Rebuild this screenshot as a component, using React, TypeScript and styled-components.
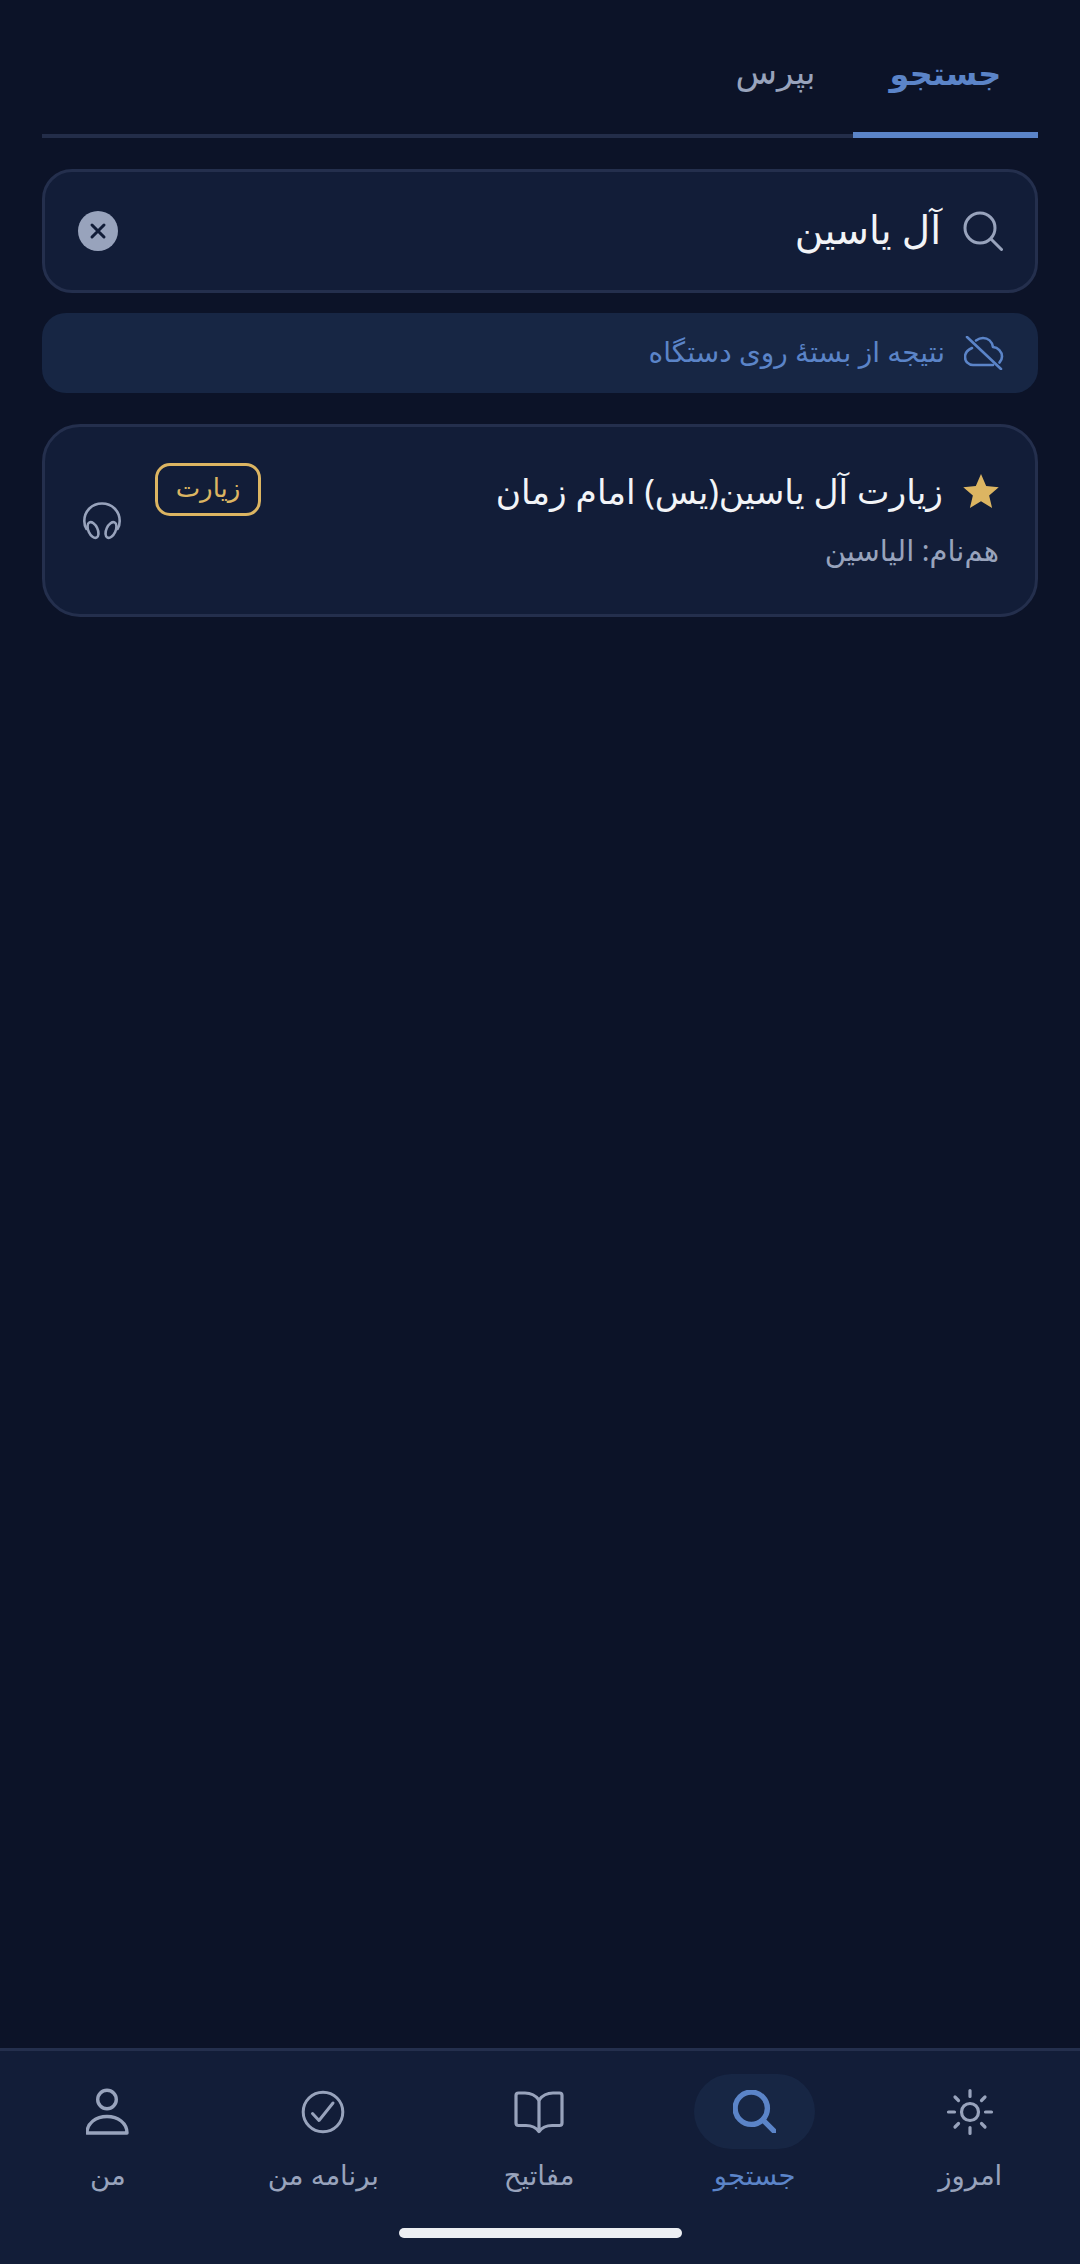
import React from 'react';
import styled, { createGlobalStyle } from 'styled-components';

const BLUE = '#5b84c8';
const MUTED = '#98a3bc';
const BG = '#0c1328';
const SURFACE = '#121d38';
const FONT = '"Noto Sans", "DejaVu Sans", sans-serif';

const GlobalStyle = createGlobalStyle`
  html, body {
    margin: 0;
    padding: 0;
    background: ${BG};
  }
  * {
    box-sizing: border-box;
  }
`;

const SearchIcon = ({ size, color, width }: { size: number; color: string; width: number }) => (
  <svg width={size} height={size} viewBox="0 0 40 40" fill="none" stroke={color} strokeWidth={width} strokeLinecap="round">
    <circle cx="17" cy="17" r="15" />
    <path d="M28 28l10.5 10.5" />
  </svg>
);

const CloudOffIcon = () => (
  <svg width="40" height="34" viewBox="0 0 40 34" fill="none" stroke={BLUE} strokeWidth="2.6" strokeLinecap="round" strokeLinejoin="round">
    <path d="M3 1l34 32" />
    <path d="M8 12C3.500 14 1 17.500 1 21c0 4.500 3.500 8 8 8h20" />
    <path d="M12 4.500C14 3 16.500 2 19 2c5 0 9 3.500 10 9 5 .5 9 4.500 9 9.500 0 2.500-1 4.500-2.500 6" />
  </svg>
);

const StarIcon = () => (
  <svg width="36" height="34" viewBox="0 0 24 23" fill="#dcb562">
    <path d="M12 0l3.500 8.200 8.500.7-6.500 5.700 2 8.400L12 18.500 4.500 23l2-8.400L0 8.900l8.500-.7z" />
  </svg>
);

const HeadphonesIcon = () => (
  <svg width="38" height="38" viewBox="0 0 38 38" fill="none" stroke={MUTED} strokeWidth="2.6" strokeLinecap="round" strokeLinejoin="round">
    <path d="M3.500 27C1.800 24.500 1.300 21.500 1.300 19 1.300 9 9 1.500 19 1.500S36.700 9 36.700 19c0 2.500-.5 5.500-2.200 8" />
    <ellipse cx="10" cy="28" rx="4.600" ry="8.400" transform="rotate(-25 10 28)" />
    <ellipse cx="28" cy="28" rx="4.600" ry="8.400" transform="rotate(25 28 28)" />
  </svg>
);

const ClearIcon = () => (
  <svg width="18" height="18" viewBox="0 0 18 18" fill="none" stroke={SURFACE} strokeWidth="3" strokeLinecap="round">
    <path d="M3 3l12 12M15 3L3 15" />
  </svg>
);

const SunIcon = () => (
  <svg width="48" height="48" viewBox="0 0 48 48" fill="none" stroke={MUTED} strokeWidth="3.200" strokeLinecap="round">
    <circle cx="24" cy="24" r="8.500" />
    <path d="M24 2.500v6M24 39.500v6M2.500 24h6M39.500 24h6M9 9l3.500 3.500M35.500 35.500L39 39M9 39l3.500-3.500M35.500 12.500L39 9" />
  </svg>
);

const BookIcon = () => (
  <svg width="50" height="44" viewBox="0 0 50 44" fill="none" stroke={MUTED} strokeWidth="3.200" strokeLinecap="round" strokeLinejoin="round">
    <path d="M25 10c-3-4-8-7-14-7H4.500C3 3 2 4 2 5.500V33c0 1.500 1 2.500 2.500 2.500H12c6 0 10 2 13 6 3-4 7-6 13-6h7.500c1.500 0 2.500-1 2.500-2.500V5.500C48 4 47 3 45.500 3H39c-6 0-11 3-14 7z" />
    <path d="M25 10v31" />
  </svg>
);

const CheckCircleIcon = () => (
  <svg width="44" height="44" viewBox="0 0 44 44" fill="none" stroke={MUTED} strokeWidth="3" strokeLinecap="round" strokeLinejoin="round">
    <circle cx="22" cy="22" r="19.800" />
    <path d="M11.500 23.500l6.500 7L32 13" />
  </svg>
);

const UserIcon = () => (
  <svg width="44" height="48" viewBox="0 0 44 48" fill="none" stroke={MUTED} strokeWidth="3.400" strokeLinecap="round" strokeLinejoin="round">
    <circle cx="21" cy="11.500" r="9.300" />
    <path d="M1 45c0-10 9-16.500 20-16.500S41 35 41 45z" />
  </svg>
);

const Page = styled.div`
  direction: rtl;
  width: 1080px;
  height: 2264px;
  display: flex;
  flex-direction: column;
  background: ${BG};
  font-family: ${FONT};
`;

const Main = styled.main`
  flex: 1;
  padding: 0 42px;
  display: flex;
  flex-direction: column;
`;

const Tabs = styled.div`
  height: 138px;
  display: flex;
  border-bottom: 4px solid #232d49;
`;

const Tab = styled.div<{ $active?: boolean }>`
  width: ${({ $active }) => ($active ? '185px' : '155px')};
  height: 138px;
  flex: none;
  display: flex;
  align-items: flex-start;
  justify-content: center;
  padding-top: ${({ $active }) => ($active ? '50px' : '48px')};
  font-size: ${({ $active }) => ($active ? '32px' : '34px')};
  line-height: 46px;
  font-weight: ${({ $active }) => ($active ? 700 : 400)};
  color: ${({ $active }) => ($active ? BLUE : MUTED)};
  border-bottom: 6px solid ${({ $active }) => ($active ? BLUE : 'transparent')};
`;

const SearchBox = styled.div`
  margin-top: 31px;
  height: 124px;
  display: flex;
  align-items: center;
  padding: 0 32px 0 33px;
  background: ${SURFACE};
  border: 3px solid #242f4d;
  border-radius: 30px;
`;

const SearchText = styled.div`
  flex: 1;
  margin: -5px 22px 0 0;
  font-size: 39px;
  line-height: 50px;
  color: #f2f4f7;
`;

const ClearButton = styled.div`
  width: 40px;
  height: 40px;
  border-radius: 50%;
  background: ${MUTED};
  display: flex;
  align-items: center;
  justify-content: center;
`;

const Notice = styled.div`
  margin-top: 20px;
  height: 80px;
  display: flex;
  align-items: center;
  gap: 19px;
  padding: 0 34px;
  background: #172644;
  border-radius: 24px;
  font-size: 28px;
  color: ${BLUE};
`;

const NoticeText = styled.span`
  margin-top: -5px;
`;

const ResultCard = styled.div`
  margin-top: 31px;
  height: 193px;
  display: flex;
  padding: 38px 36px 0 38px;
  background: ${SURFACE};
  border: 3px solid #242f4d;
  border-radius: 38px;
`;

const ResultBody = styled.div`
  flex: 1;
  display: flex;
  flex-direction: column;
`;

const TitleRow = styled.div`
  display: flex;
  align-items: center;
  gap: 20px;
  height: 52px;
`;

const Title = styled.div`
  flex: 1;
  font-size: 34.500px;
  line-height: 52px;
  color: #f2f4f7;
`;

const Synonym = styled.div`
  margin-top: 15px;
  font-size: 29px;
  line-height: 36px;
  color: ${MUTED};
`;

const Badge = styled.div`
  width: 106px;
  height: 53px;
  margin-top: -2px;
  padding-bottom: 5px;
  flex: none;
  display: flex;
  align-items: center;
  justify-content: center;
  border: 3px solid #dcb562;
  border-radius: 15px;
  font-size: 26px;
  color: #dcb562;
`;

const AudioButton = styled.div`
  flex: none;
  margin: 37px 34px 0 0;
  width: 38px;
  height: 38px;
`;

const BottomBar = styled.nav`
  height: 216px;
  background: ${SURFACE};
  border-top: 3px solid #242f4d;
  display: flex;
  flex-direction: column;
  align-items: center;
`;

const NavRow = styled.div`
  width: 100%;
  display: grid;
  grid-template-columns: repeat(5, 1fr);
  padding: 23px 2px 0 0;
`;

const NavItem = styled.div<{ $active?: boolean }>`
  display: flex;
  flex-direction: column;
  align-items: center;
  color: ${({ $active }) => ($active ? BLUE : MUTED)};
`;

const NavIcon = styled.div<{ $active?: boolean }>`
  width: 121px;
  height: 75px;
  border-radius: 38px;
  display: flex;
  align-items: center;
  justify-content: center;
  background: ${({ $active }) => ($active ? '#172644' : 'transparent')};
`;

const NavLabel = styled.div`
  margin-top: 6px;
  font-size: 27.500px;
  line-height: 40px;
`;

const HomeIndicator = styled.div`
  margin-top: 33px;
  width: 283px;
  height: 10px;
  border-radius: 5px;
  background: #eceef2;
`;

const App: React.FC = () => {
  const navItems = [
    { label: 'امروز', icon: <SunIcon /> },
    { label: 'جستجو', icon: <SearchIcon size={43} color={BLUE} width={5} />, active: true },
    { label: 'مفاتیح', icon: <BookIcon /> },
    { label: 'برنامه من', icon: <CheckCircleIcon /> },
    { label: 'من', icon: <UserIcon /> },
  ];

  return (
    <Page>
      <GlobalStyle />
      <Main>
        <Tabs>
          <Tab $active>جستجو</Tab>
          <Tab>بپرس</Tab>
        </Tabs>
        <SearchBox>
          <SearchIcon size={40} color={MUTED} width={3} />
          <SearchText>آل یاسین</SearchText>
          <ClearButton>
            <ClearIcon />
          </ClearButton>
        </SearchBox>
        <Notice>
          <CloudOffIcon />
          <NoticeText>نتیجه از بستهٔ روی دستگاه</NoticeText>
        </Notice>
        <ResultCard>
          <ResultBody>
            <TitleRow>
              <StarIcon />
              <Title>زیارت آل یاسین(یس) امام زمان</Title>
            </TitleRow>
            <Synonym>هم‌نام: الیاسین</Synonym>
          </ResultBody>
          <Badge>زیارت</Badge>
          <AudioButton>
            <HeadphonesIcon />
          </AudioButton>
        </ResultCard>
      </Main>
      <BottomBar>
        <NavRow>
          {navItems.map(item => (
            <NavItem key={item.label} $active={item.active}>
              <NavIcon $active={item.active}>{item.icon}</NavIcon>
              <NavLabel>{item.label}</NavLabel>
            </NavItem>
          ))}
        </NavRow>
        <HomeIndicator />
      </BottomBar>
    </Page>
  );
};

export default App;
